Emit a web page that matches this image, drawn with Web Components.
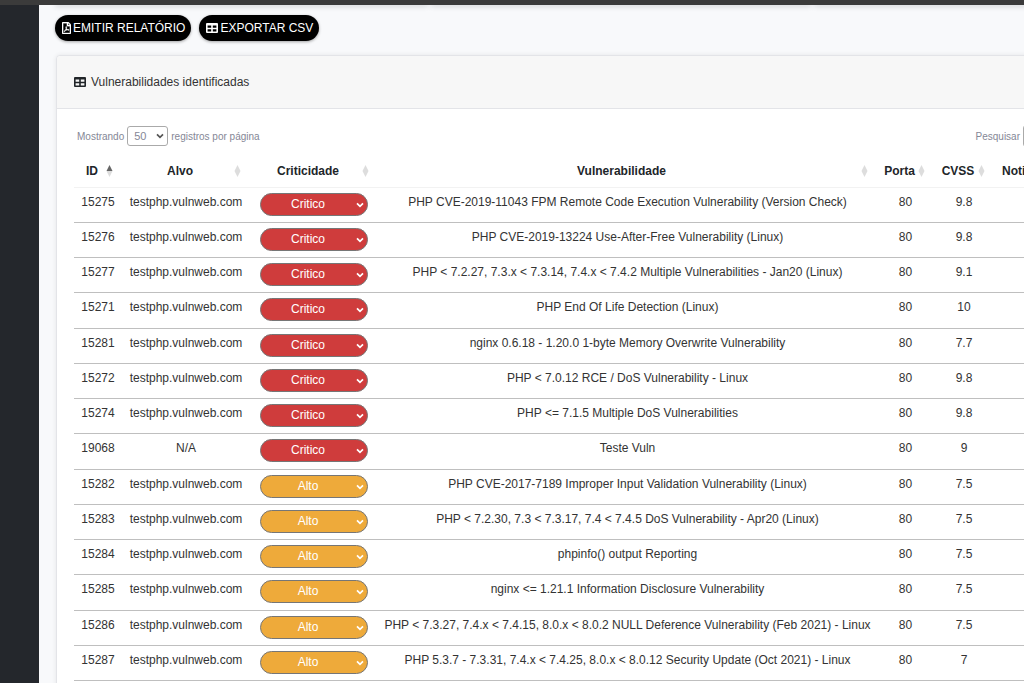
<!DOCTYPE html>
<html lang="pt-BR">
<head>
<meta charset="utf-8">
<title>Vulnerabilidades identificadas</title>
<style>
html, body { margin: 0; height: 100%; }
body { font: 12px/17px "Liberation Sans", Arial, sans-serif; color: #212529; background: #f8f9fb; overflow: hidden; }
</style>
</head>
<body>
<app-shell>
  <summary-strip></summary-strip>
  <action-bar>
    <action-button icon="pdf">EMITIR RELATÓRIO</action-button>
    <action-button icon="table">EXPORTAR CSV</action-button>
  </action-bar>
  <data-card>
    <span slot="title">Vulnerabilidades identificadas</span>
    <table-toolbar></table-toolbar>
    <vuln-table></vuln-table>
  </data-card>
</app-shell>

<script>
const ICONS = {
  table: '<svg viewBox="0 0 12 10" width="12" height="10" aria-hidden="true"><path fill="currentColor" fill-rule="evenodd" d="M1 0h10a1 1 0 0 1 1 1v8a1 1 0 0 1-1 1H1a1 1 0 0 1-1-1V1a1 1 0 0 1 1-1zM1.6 2.6v2.1h3.6V2.6zM6.8 2.6v2.1h3.6V2.6zM1.6 6.3v2.1h3.6V6.3zM6.8 6.3v2.1h3.6V6.3z"/></svg>',
  pdf: '<svg viewBox="0 0 384 512" width="9" height="12" aria-hidden="true"><path fill="currentColor" stroke="currentColor" stroke-width="14" d="M369.900 97.900L286 14C277 5 264.800-.1 252.100-.1H48C21.500 0 0 21.500 0 48v416c0 26.500 21.500 48 48 48h288c26.500 0 48-21.500 48-48V131.900c0-12.700-5.100-25-14.100-34zM332.100 128H256V51.900l76.100 76.100zM48 464V48h160v104c0 13.300 10.700 24 24 24h104v288H48zm250.200-143.700c-12.200-12-47-8.700-64.400-6.500-17.200-10.500-28.700-25-36.800-46.300 3.900-16.100 10.100-40.600 5.400-56-4.200-26.200-37.800-23.600-42.600-5.900-4.400 16.100-.4 38.500 7 67.100-10 23.900-24.900 56-35.400 74.400-20 10.300-47 26.200-51 46.200-3.300 15.800 26 55.200 76.100-31.200 22.400-7.400 46.800-16.500 68.400-20.100 18.900 10.200 41 17 55.800 17 25.500 0 28-28.200 17.500-38.700z"/></svg>'
};
const chevron = color => `url("data:image/svg+xml,%3Csvg xmlns='http://www.w3.org/2000/svg' width='8' height='6' viewBox='0 0 8 6'%3E%3Cpath fill='none' stroke='%23${color}' stroke-width='1.7' d='M1 1.300 4 4.300 7 1.300'/%3E%3C/svg%3E")`;

class ShadowElement extends HTMLElement {
  connectedCallback() {
    if (this.shadowRoot) return;
    this.attachShadow({ mode: 'open' }).innerHTML = this.render();
  }
}

customElements.define('app-shell', class extends ShadowElement {
  render() {
    return `<style>
      :host { display: flex; flex-direction: column; height: 100vh; }
      header { flex: none; height: 5px; background: #3b3b3b; }
      .body { flex: 1; min-height: 0; display: flex; }
      nav { flex: none; width: 39px; background: #24272c; }
      main { flex: 1; min-width: 0; padding: 0 17px; overflow: hidden; }
      .content { width: calc(100% + 115px); }
    </style>
    <header></header>
    <div class="body"><nav aria-label="Menu"></nav><main><div class="content"><slot></slot></div></main></div>`;
  }
});

customElements.define('summary-strip', class extends ShadowElement {
  render() {
    return `<style>
      :host { display: grid; grid-template-columns: 371px 378px 1fr; gap: 5px; height: 10px; }
      div { height: 0; box-shadow: 0 0 5px 1px rgba(58, 59, 69, .35); }
    </style><div></div><div></div><div></div>`;
  }
});

customElements.define('action-bar', class extends ShadowElement {
  render() {
    return `<style>
      :host { display: flex; gap: 8px; margin: 0 -1px 14px; }
    </style><slot></slot>`;
  }
});

customElements.define('action-button', class extends ShadowElement {
  render() {
    return `<style>
      :host { display: block; }
      button { display: flex; align-items: center; gap: 2px; height: 26px; padding: 0 6px 0 7px; border: 0; border-radius: 13px;
        background: #000; color: #fff; font: inherit; white-space: nowrap; box-shadow: 0 1px 3px rgba(0, 0, 0, .35); }
    </style><button type="button">${ICONS[this.getAttribute('icon')]}<span><slot></slot></span></button>`;
  }
});

customElements.define('data-card', class extends ShadowElement {
  render() {
    return `<style>
      :host { display: block; border: 1px solid #e3e4e8; border-radius: 4px 4px 0 0; background: #fff; box-shadow: 0 0 4px rgba(58, 59, 69, .1); }
      header { display: flex; align-items: center; gap: 5px; height: 52px; padding: 0 17px; background: #f7f7f7; border-bottom: 1px solid #e3e4e8; border-radius: 4px 4px 0 0; }
      h2 { margin: 0; font: inherit; color: #333; }
      .body { padding: 17px; }
    </style>
    <header>${ICONS.table}<h2><slot name="title"></slot></h2></header>
    <div class="body"><slot></slot></div>`;
  }
});

customElements.define('table-toolbar', class extends ShadowElement {
  render() {
    return `<style>
      :host { display: flex; justify-content: space-between; padding: 0 3px; color: #858796; font-size: 10px; }
      div { display: flex; align-items: center; gap: 3px; height: 20px; }
      select { appearance: none; box-sizing: border-box; width: 41px; height: 20px; padding: 0 6px; border: 1px solid #aaa; border-radius: 3px;
        background: #fff ${chevron('555')} right 3px center no-repeat; color: inherit; font-family: inherit; font-size: 11px; }
      input { box-sizing: border-box; width: 78px; height: 22px; padding: 0 4px; border: 1px solid #aaa; border-radius: 3px; background: #fff; font: inherit; }
    </style>
    <div><label for="len">Mostrando</label><select id="len"><option>10</option><option selected>50</option></select><label for="len">registros por página</label></div>
    <div><label for="q">Pesquisar</label><input id="q" type="search"></div>`;
  }
});

customElements.define('severity-select', class extends ShadowElement {
  render() {
    const v = this.getAttribute('value');
    return `<style>
      :host { display: block; }
      select { appearance: none; box-sizing: border-box; display: block; width: 100%; height: 23px; padding: 0 12px 0 0; border: 1px solid #767676; border-radius: 12px;
        background: #cf3c3c ${chevron('fff')} right 3px center no-repeat; color: #fff; font: inherit; text-align: center; text-align-last: center; }
      select.Alto { background-color: #eeaa3a; }
    </style>
    <select class="${v}" aria-label="Criticidade">${['Critico', 'Alto'].map(o => `<option${o === v ? ' selected' : ''}>${o}</option>`).join('')}</select>`;
  }
});

customElements.define('sort-arrows', class extends ShadowElement {
  render() {
    const up = this.hasAttribute('up') ? '#666' : '#ddd';
    return `<style>
      :host { display: block; }
      svg { display: block; }
    </style><svg viewBox="0 0 7 12" width="7" height="12" aria-hidden="true"><path fill="${up}" d="M.5 6 3.500 0 6.500 6z"/><path fill="#ddd" d="M.5 6 3.500 12 6.500 6z"/></svg>`;
  }
});

const ROWS = [
  ['15275', 'testphp.vulnweb.com', 'Critico', 'PHP CVE-2019-11043 FPM Remote Code Execution Vulnerability (Version Check)', '80', '9.8'],
  ['15276', 'testphp.vulnweb.com', 'Critico', 'PHP CVE-2019-13224 Use-After-Free Vulnerability (Linux)', '80', '9.8'],
  ['15277', 'testphp.vulnweb.com', 'Critico', 'PHP < 7.2.27, 7.3.x < 7.3.14, 7.4.x < 7.4.2 Multiple Vulnerabilities - Jan20 (Linux)', '80', '9.1'],
  ['15271', 'testphp.vulnweb.com', 'Critico', 'PHP End Of Life Detection (Linux)', '80', '10'],
  ['15281', 'testphp.vulnweb.com', 'Critico', 'nginx 0.6.18 - 1.20.0 1-byte Memory Overwrite Vulnerability', '80', '7.7'],
  ['15272', 'testphp.vulnweb.com', 'Critico', 'PHP < 7.0.12 RCE / DoS Vulnerability - Linux', '80', '9.8'],
  ['15274', 'testphp.vulnweb.com', 'Critico', 'PHP <= 7.1.5 Multiple DoS Vulnerabilities', '80', '9.8'],
  ['19068', 'N/A', 'Critico', 'Teste Vuln', '80', '9'],
  ['15282', 'testphp.vulnweb.com', 'Alto', 'PHP CVE-2017-7189 Improper Input Validation Vulnerability (Linux)', '80', '7.5'],
  ['15283', 'testphp.vulnweb.com', 'Alto', 'PHP < 7.2.30, 7.3 < 7.3.17, 7.4 < 7.4.5 DoS Vulnerability - Apr20 (Linux)', '80', '7.5'],
  ['15284', 'testphp.vulnweb.com', 'Alto', 'phpinfo() output Reporting', '80', '7.5'],
  ['15285', 'testphp.vulnweb.com', 'Alto', 'nginx <= 1.21.1 Information Disclosure Vulnerability', '80', '7.5'],
  ['15286', 'testphp.vulnweb.com', 'Alto', 'PHP < 7.3.27, 7.4.x < 7.4.15, 8.0.x < 8.0.2 NULL Deference Vulnerability (Feb 2021) - Linux', '80', '7.5'],
  ['15287', 'testphp.vulnweb.com', 'Alto', 'PHP 5.3.7 - 7.3.31, 7.4.x < 7.4.25, 8.0.x < 8.0.12 Security Update (Oct 2021) - Linux', '80', '7']
];
const HEADS = ['ID', 'Alvo', 'Criticidade', 'Vulnerabilidade', 'Porta', 'CVSS', 'Noti'];
const esc = s => s.replace(/</g, '&lt;');

customElements.define('vuln-table', class extends ShadowElement {
  render() {
    const head = HEADS.map((h, i) => `<th scope="col"><div><span>${h}</span><sort-arrows${i ? '' : ' up'}></sort-arrows></div></th>`).join('');
    const body = ROWS.map(r => '<tr>' + r.map((c, i) => i === 2
      ? `<td class="sev"><severity-select value="${c}"></severity-select></td>`
      : `<td>${esc(c)}</td>`).join('') + '<td></td></tr>').join('');
    return `<style>
      :host { display: block; margin-top: 8px; }
      table { width: 100%; table-layout: fixed; border-collapse: separate; border-spacing: 0; }
      .id { width: 48px; } .host, .sev-col { width: 128px; } .port { width: 57px; } .cvss { width: 60px; } .note { width: 110px; }
      th, td { box-sizing: border-box; padding: 0; text-align: center; vertical-align: top; white-space: nowrap; }
      th { height: 34px; padding-top: 1px; border-bottom: 1px solid #f2f2f2; vertical-align: middle; }
      th div { display: flex; align-items: center; padding: 0 9px 0 4px; }
      th span { flex: 1; }
      th:last-child div { padding-left: 8px; text-align: left; }
      td { height: 35px; padding-top: 6px; border-bottom: 1px solid #bfbfbf; color: #333; }
      /* every fourth row is a pixel taller to keep the list's average rhythm */
      tbody tr:nth-child(4n) td { height: 36px; }
      td.sev { padding: 5px 10px 0; }
    </style>
    <table>
      <colgroup><col class="id"><col class="host"><col class="sev-col"><col><col class="port"><col class="cvss"><col class="note"></colgroup>
      <thead><tr>${head}</tr></thead>
      <tbody>${body}</tbody>
    </table>`;
  }
});
</script>
</body>
</html>
